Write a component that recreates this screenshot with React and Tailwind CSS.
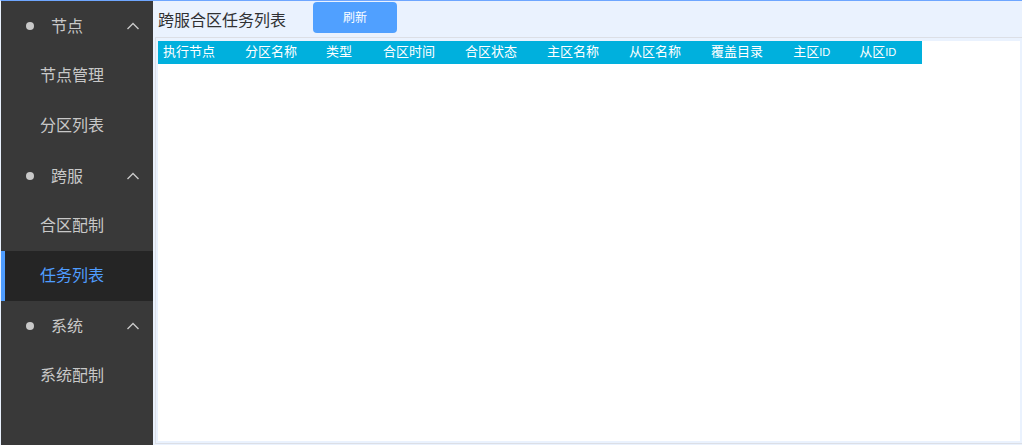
const font = { fontFamily: '"Noto Sans CJK SC", "Liberation Sans", sans-serif' };

function Group({ label }) {
  return (
    <div className="relative flex h-[50px] items-center text-[16px] text-[#c8c8c8]">
      <span className="ml-[25px] h-2 w-2 rounded-full bg-[#c8c8c8]" />
      <span className="mb-[3px] ml-[17px]">{label}</span>
      <svg className="absolute left-[125px] top-[20px] h-[10px] w-[14px]" viewBox="0 0 14 10" fill="none" stroke="#c8c8c8" strokeWidth="1.4">
        <path d="M1.5 8 L7 2.5 L12.5 8" />
      </svg>
    </div>
  );
}

function Item({ label, active }) {
  return (
    <div
      className={
        active
          ? "flex h-[50px] items-center border-l-4 border-[#4f9dff] bg-[#252525] pb-[5px] pl-[35px] text-[16px] text-[#4f9dff]"
          : "flex h-[50px] items-center pb-[5px] pl-[39px] text-[16px] text-[#c8c8c8]"
      }
    >
      {label}
    </div>
  );
}

const cols = [
  ["执行节点", "pr-[25px]"],
  ["分区名称", "pr-[24px]"],
  ["类型", "pr-[26px]"],
  ["合区时间", "pr-[25px]"],
  ["合区状态", "pr-[25px]"],
  ["主区名称", "pr-[25px]"],
  ["从区名称", "pr-[25px]"],
  ["覆盖目录", "pr-[25px]"],
];

function IdCol({ label, pr }) {
  return (
    <th className={`whitespace-nowrap pb-[3px] pl-[5px] text-left font-normal ${pr}`}>
      {label}
      <span className="text-[11px]" style={{ fontFamily: '"Liberation Sans", sans-serif' }}>ID</span>
    </th>
  );
}

export default function App() {
  return (
    <div className="flex h-[445px] w-[1022px] overflow-hidden border-l border-t border-l-[#eaf2fe] border-t-[#6ea6ff] bg-[#eaf2fe]" style={font}>
      <aside className="h-full w-[152px] shrink-0 bg-[#393939]">
        <Group label="节点" />
        <Item label="节点管理" />
        <Item label="分区列表" />
        <Group label="跨服" />
        <Item label="合区配制" />
        <Item label="任务列表" active />
        <Group label="系统" />
        <Item label="系统配制" />
      </aside>
      <main className="flex h-full min-w-0 flex-1 flex-col pl-[2px]">
        <div className="flex h-[36px] shrink-0 items-center pl-[3px]">
          <h1 className="w-[155px] text-[16px] font-normal text-[#303133]">跨服合区任务列表</h1>
          <button className="mb-[4px] h-[31px] w-[84px] rounded bg-[#50a0ff] text-[12px] text-white">刷新</button>
        </div>
        <div className="mb-px flex min-h-0 flex-1 border-y border-l border-[#dcdfe6] pb-[2px] pl-[2px] pr-[2px] pt-[3px]">
          <div className="flex-1 bg-white">
            <table className="border-collapse text-[13px] text-white">
              <thead>
                <tr className="h-[23px] bg-[#00b0dd]">
                  {cols.map(([c, pr]) => (
                    <th key={c} className={`whitespace-nowrap pb-[3px] pl-[5px] text-left font-normal ${pr}`}>{c}</th>
                  ))}
                  <IdCol label="主区" pr="pr-[24px]" />
                  <IdCol label="从区" pr="pr-[26px]" />
                </tr>
              </thead>
            </table>
          </div>
        </div>
      </main>
    </div>
  );
}
